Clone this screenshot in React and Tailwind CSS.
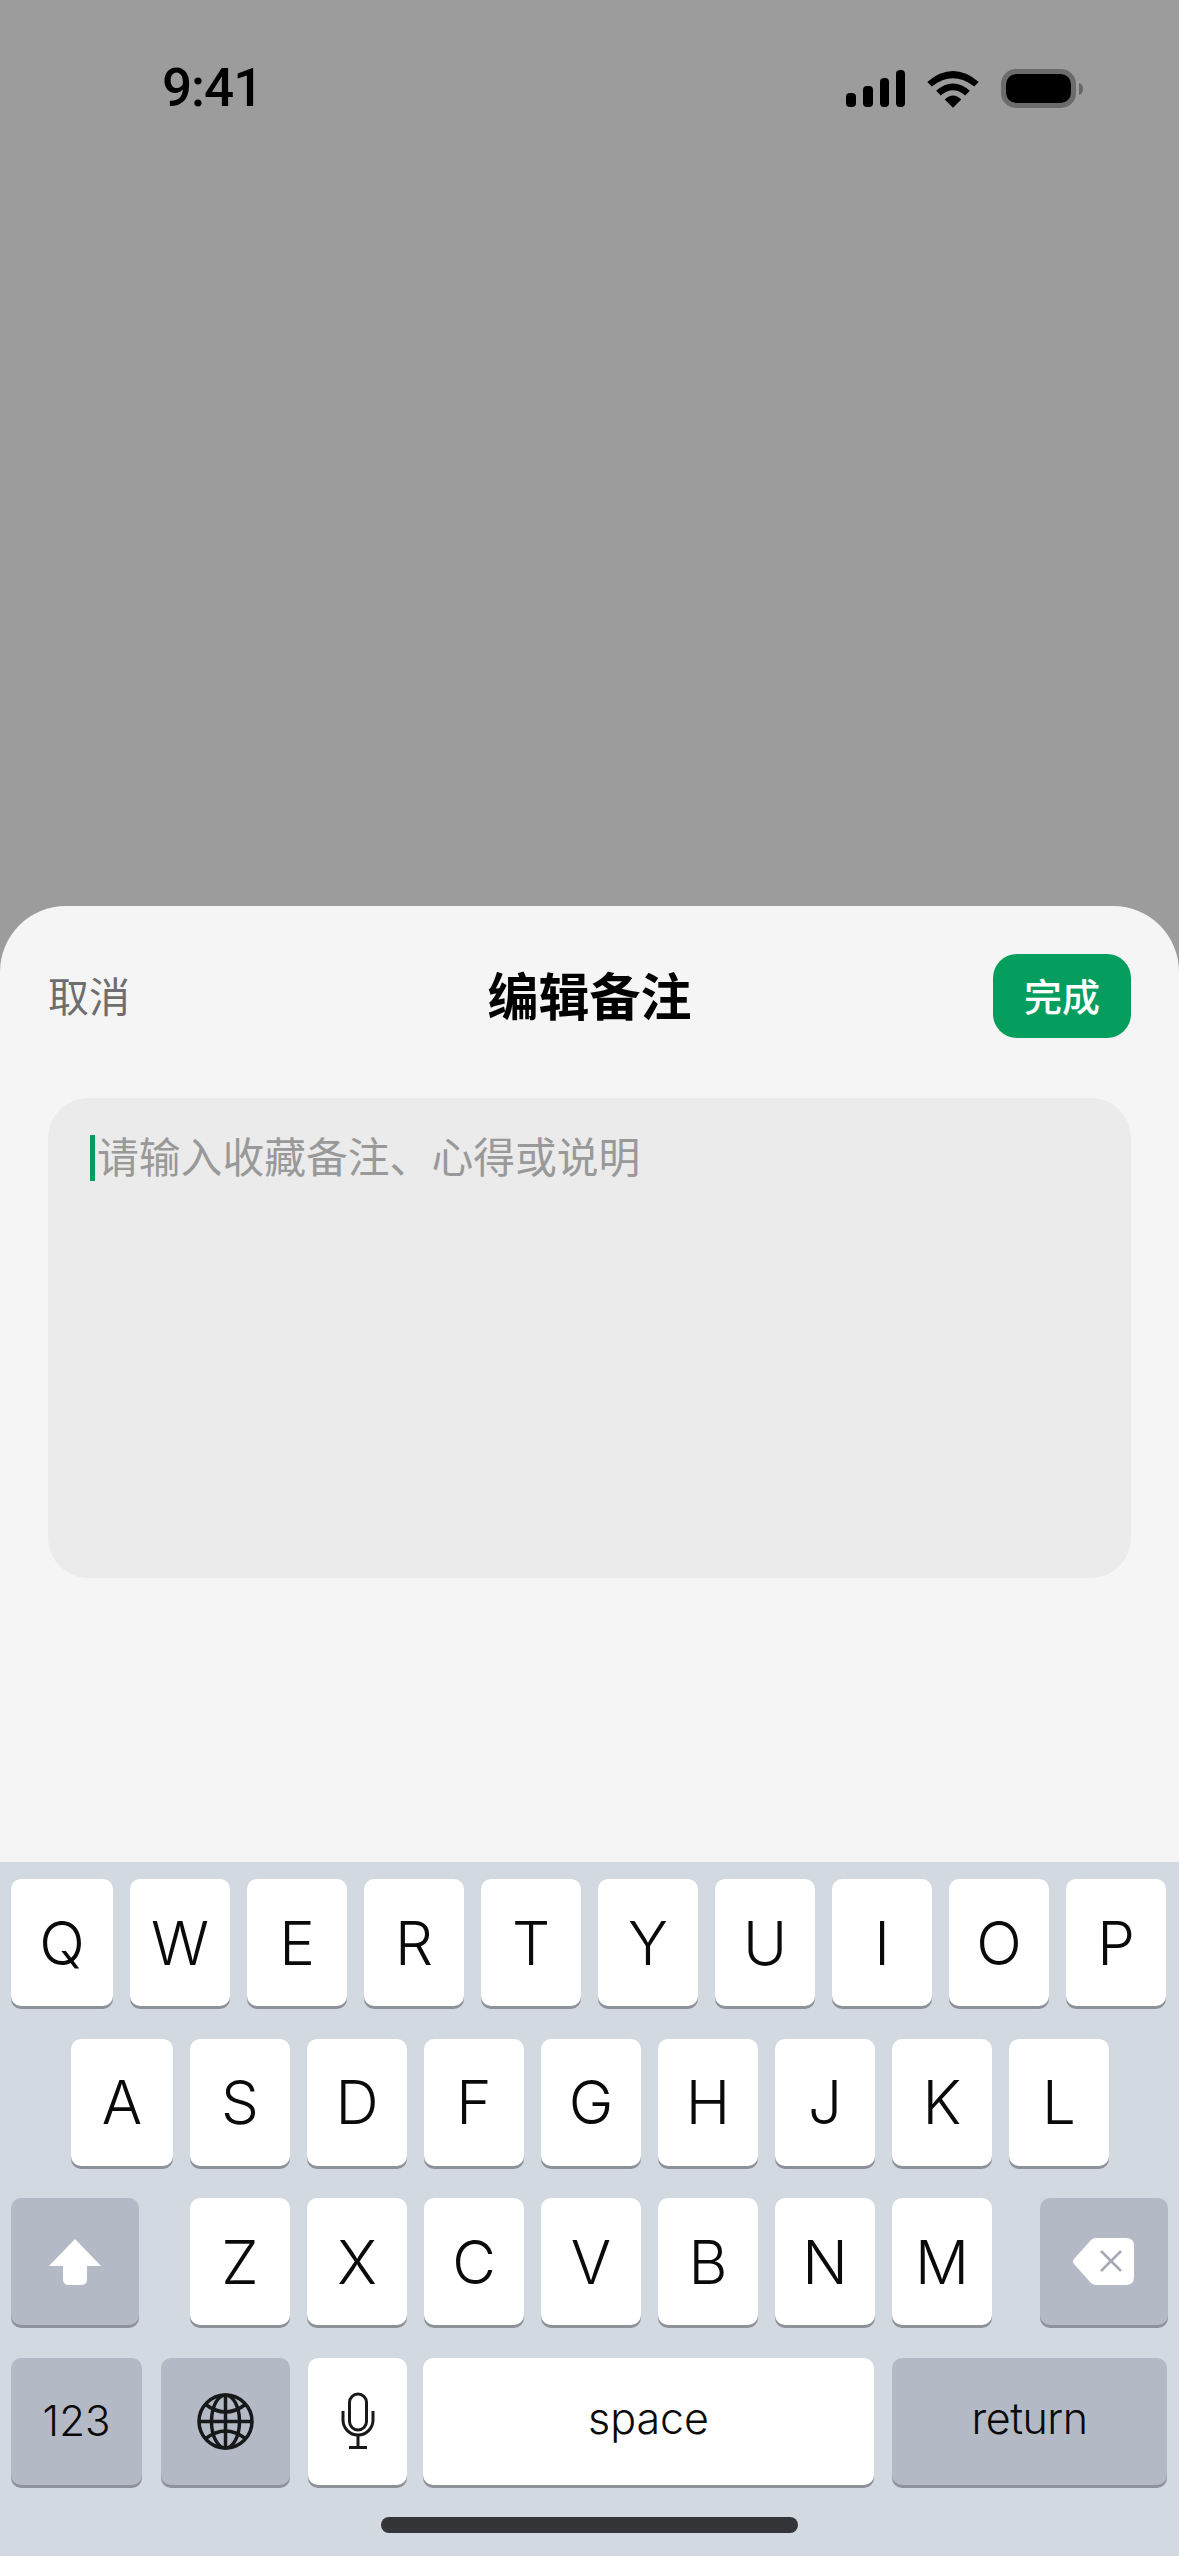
// note sheet with the iOS keyboard open

const ROW_ONE = ['W', 'E', 'R', 'T', 'Y', 'U', 'I', 'O', 'P'];
const ROW_TWO = ['S', 'D', 'F', 'G', 'H', 'J', 'K', 'L'];
const ROW_THREE = ['Z', 'X', 'C', 'V', 'B', 'N', 'M'];

const LIGHT_KEY = 'flex items-center justify-center h-[127px] rounded-[10px] bg-white shadow-[0_3px_0_#8d9198] text-[#0a0a0a]';
const DARK_KEY = 'flex items-center justify-center h-[127px] rounded-[10px] bg-[#b3bac6] shadow-[0_3px_0_#8d929c] text-[#0a0a0a]';

const LetterKey = ({ label, wide }) => (
  <div className={`${LIGHT_KEY} ${wide ? 'w-[102px]' : 'w-[100px]'} text-[60px] leading-none font-light`}>
    {label}
  </div>
);

const StatusBar = () => (
  <div className="flex items-start justify-between pl-[162px] pr-[96px] pt-[58px] h-[120px] font-['Roboto',sans-serif]">
    <span className="text-[53px] leading-[60px] font-medium tracking-[-1px] text-black">9:41</span>
    <div className="flex items-start gap-[22px] pt-[12px]">
      <div className="flex items-end gap-[7px] h-[37px]">
        <div className="w-[10px] h-[14px] rounded-[4px] bg-black" />
        <div className="w-[10px] h-[21px] rounded-[4px] bg-black" />
        <div className="w-[9px] h-[29px] rounded-[4px] bg-black" />
        <div className="w-[9px] h-[37px] rounded-[4px] bg-black" />
      </div>
      <svg width="52" height="37" viewBox="0 0 156 112" className="mt-[1px]">
        <path d="M0 33Q78 -33 156 33L142 47Q78 -3 14 47Z" fill="#000" />
        <path d="M27 60Q78 16 129 60L115 74Q78 42 41 74Z" fill="#000" />
        <path d="M53 86Q78 62 103 86L78 111Z" fill="#000" />
      </svg>
      <div className="flex items-center gap-[3px] -mt-[1px]">
        <div className="w-[75px] h-[39px] rounded-[15px] border-[5px] border-[#6c6c6c] p-0">
          <div className="w-full h-full rounded-[10px] bg-black" />
        </div>
        <svg width="4" height="12" viewBox="0 0 4 12">
          <path d="M0 0C3 1 4 3 4 6C4 9 3 11 0 12Z" fill="#666" />
        </svg>
      </div>
    </div>
  </div>
);

const NoteSheet = () => (
  <div className="flex-1 rounded-t-[66px] bg-[#f5f5f5] px-[48px] pt-[48px] font-['Noto_Sans_CJK_SC',sans-serif]">
    <div className="flex items-center justify-between">
      <div className="w-[138px] text-[41px] leading-[56px] text-[#6e6e6e] -mt-[5px]">取消</div>
      <div className="text-[51px] leading-[60px] font-bold text-black -mt-[5px]">编辑备注</div>
      <div className="flex items-center justify-center w-[138px] h-[84px] rounded-[24px] bg-[#059e5f] text-[38px] font-medium text-white">
        <span className="-mt-[3px]">完成</span>
      </div>
    </div>
    <div className="mt-[60px] h-[480px] rounded-[40px] bg-[#ebebeb] pl-[42px] pt-[37px] flex items-start gap-[2px]">
      <div className="w-[5px] h-[46px] bg-[#059e5f]" />
      <div className="text-[41.800px] leading-[46px] text-[#999999] -mt-[3px]">请输入收藏备注、心得或说明</div>
    </div>
  </div>
);

const Keyboard = () => (
  <div className="relative h-[694px] bg-[#d3d9e1] pt-[17px] px-[11px] font-['Inter',sans-serif]">
    <div className="flex flex-col gap-[32.5px]">
      <div className="flex gap-[17px]">
        <LetterKey label="Q" wide />
        {ROW_ONE.map((k) => <LetterKey key={k} label={k} />)}
      </div>
      <div className="flex gap-[17px] pl-[60px]">
        <LetterKey label="A" wide />
        {ROW_TWO.map((k) => <LetterKey key={k} label={k} />)}
      </div>
      <div className="flex">
        <div className={`${DARK_KEY} w-[128px]`}>
          <svg width="52" height="46" viewBox="0 0 52 46">
            <path d="M26 0L52 27H38V40Q38 46 32 46H20Q14 46 14 40V27H0Z" fill="#fff" />
          </svg>
        </div>
        <div className="flex gap-[17px] ml-[51px]">
          {ROW_THREE.map((k) => <LetterKey key={k} label={k} />)}
        </div>
        <div className={`${DARK_KEY} w-[128px] ml-auto`}>
          <svg width="62" height="47" viewBox="0 0 62 47">
            <path d="M18 2Q20 0 23 0H53Q61 0 61 8V39Q61 47 53 47H23Q20 47 18 45L1 26Q-1 23.500 1 21Z" fill="#fff" />
            <path d="M28 13L48 33M48 13L28 33" stroke="#a4a9b5" strokeWidth="2.500" fill="none" />
          </svg>
        </div>
      </div>
      <div className="flex">
        <div className={`${DARK_KEY} w-[131px] text-[42px] leading-none font-light`}>123</div>
        <div className={`${DARK_KEY} w-[129px] ml-[19px]`}>
          <svg width="57" height="57" viewBox="0 0 57 57" fill="none" stroke="#17181a" strokeWidth="3.500">
            <circle cx="28.500" cy="28.500" r="26.500" />
            <ellipse cx="28.500" cy="28.500" rx="14" ry="26.500" />
            <path d="M28.500 2V55M2 28.500H55" />
            <path d="M8 11Q28.500 27 49 11" />
            <path d="M8 46Q28.500 30 49 46" />
          </svg>
        </div>
        <div className={`${LIGHT_KEY} w-[99px] ml-[18px]`}>
          <svg width="34" height="58" viewBox="0 0 34 58" fill="none" stroke="#17181a" strokeWidth="3">
            <rect x="8.500" y="2" width="17" height="36" rx="8.500" />
            <path d="M2 19V28A15 15 0 0 0 32 28V19" />
            <path d="M17 43V55.500M8 55.500H26" />
          </svg>
        </div>
        <div className={`${LIGHT_KEY} w-[451px] ml-[16px] text-[43px] leading-none font-light`}>
          <span className="-mt-[5px]">space</span>
        </div>
        <div className={`${DARK_KEY} w-[275px] ml-[18px] text-[43px] leading-none font-light tracking-[-0.5px]`}>
          <span className="-mt-[5px]">return</span>
        </div>
      </div>
    </div>
    <div className="absolute left-[381px] top-[655px] w-[417px] h-[16px] rounded-full bg-[#333538]" />
  </div>
);

export default function App() {
  return (
    <div className="flex flex-col w-[1179px] h-[2556px] overflow-hidden bg-[#9c9c9c]">
      <StatusBar />
      <div className="h-[786px]" />
      <NoteSheet />
      <Keyboard />
    </div>
  );
}
